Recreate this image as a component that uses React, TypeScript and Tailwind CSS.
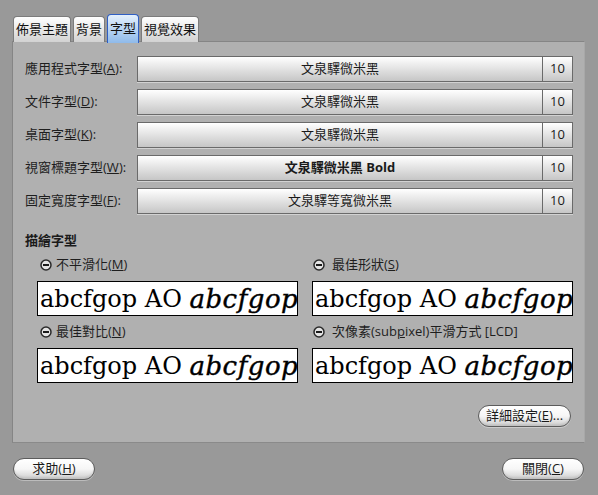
import React from "react";

const uiFont = '"Open Sans", "Noto Sans CJK TC", sans-serif';

const fontRows = [
  { label: "應用程式字型", key: "A", font: "文泉驛微米黑", bold: false },
  { label: "文件字型", key: "D", font: "文泉驛微米黑", bold: false },
  { label: "桌面字型", key: "K", font: "文泉驛微米黑", bold: false },
  { label: "視窗標題字型", key: "W", font: "文泉驛微米黑 Bold", bold: true },
  { label: "固定寬度字型", key: "F", font: "文泉驛等寬微米黑", bold: false },
];

const tabs = ["佈景主題", "背景", "字型", "視覺效果"];

function MinusIcon() {
  return (
    <svg width="12" height="12" viewBox="0 0 12 12" className="shrink-0">
      <circle cx="6" cy="6" r="5" fill="#e4e4e4" stroke="#2a2a2a" strokeWidth="1.5" />
      <rect x="3" y="5" width="6" height="2" fill="#1a1a1a" />
    </svg>
  );
}

function Preview() {
  return (
    <div
      className="h-[35px] bg-white border border-black flex items-center pl-[2px] whitespace-nowrap overflow-hidden text-black text-[24px] leading-none"
      style={{ fontFamily: '"DejaVu Serif", serif' }}
    >
      abcfgop AO&nbsp;<span className="italic text-[26px] tracking-[0.5px] [-webkit-text-stroke:0.4px_black]">abcfgop</span>
    </div>
  );
}

function PillButton({ children, className }: { children: React.ReactNode; className?: string }) {
  return (
    <div
      className={`h-[22px] rounded-full border border-[#5c5c5c] bg-gradient-to-b from-white via-[#f6f6f6] to-[#cfcfcf] shadow-[inset_0_-2px_2px_rgba(0,0,0,0.08),0_1px_0_rgba(255,255,255,0.35)] flex items-center justify-center text-[13px] text-[#1a1a1a] ${className ?? ""}`}
    >
      {children}
    </div>
  );
}

export default function App() {
  return (
    <div
      className="w-[598px] h-[495px] bg-[#999999] relative overflow-hidden"
      style={{ fontFamily: uiFont }}
    >
      {/* Tabs */}
      <div className="flex items-end gap-[2px] pl-[13px] pt-[13px] h-[42px]">
        {tabs.map((tab) =>
          tab === "字型" ? (
            <div
              key={tab}
              className="relative z-10 h-[29px] px-[2px] -mb-[1px] border border-b-0 border-[#2f5fc4] rounded-t-[4px] bg-gradient-to-b from-[#e4f0fc] to-[#8fbaea] flex items-center text-[13px] text-[#111]"
            >
              {tab}
            </div>
          ) : (
            <div
              key={tab}
              className="h-[26px] px-[2px] border border-b-0 border-[#7c7c7c] rounded-t-[4px] bg-gradient-to-b from-white to-[#d2d2d2] flex items-center text-[13px] text-[#111]"
            >
              {tab}
            </div>
          )
        )}
      </div>

      {/* Panel */}
      <div className="ml-[12px] w-[573px] h-[402px] -mt-[1px] bg-[#b0b0b0] border border-[#858585] border-r-[#a8a8a8] border-b-[#8a8a8a] pl-[12px] pr-[11px] pt-[14px] flex flex-col">
        <div className="flex flex-col gap-[7px]">
          {fontRows.map((row) => (
            <div key={row.key} className="flex items-center h-[26px]">
              <div className="w-[112px] text-[13px] text-[#1e1e1e] whitespace-nowrap">
                {row.label}(<span className="underline">{row.key}</span>):
              </div>
              <div className="flex-1 flex h-[26px] shadow-[0_1px_0_#d2d2d2]">
                <div
                  className={`flex-1 border border-[#6a6a6a] bg-gradient-to-b from-white to-[#c6c6c6] flex items-center justify-center text-[13px] text-[#1a1a1a] ${
                    row.bold ? "font-bold" : ""
                  }`}
                >
                  {row.font}
                </div>
                <div className="w-[30px] border border-l-0 border-[#6a6a6a] bg-gradient-to-b from-white to-[#c6c6c6] flex items-center justify-center text-[13px] text-[#1a1a1a]">
                  10
                </div>
              </div>
            </div>
          ))}
        </div>

        <div className="mt-[19px] h-[16px] flex items-center text-[13px] font-bold text-[#1a1a1a]">
          描繪字型
        </div>

        <div className="ml-[12px] grid grid-cols-2 gap-x-[14px]">
          <div className="flex flex-col">
            <div className="h-[32px] flex items-center gap-[4px] pl-[3px] text-[13px] text-[#1e1e1e]">
              <MinusIcon />
              <span>
                不平滑化(<span className="underline">M</span>)
              </span>
            </div>
            <Preview />
          </div>
          <div className="flex flex-col">
            <div className="h-[32px] flex items-center gap-[7px] pl-[1px] text-[13px] text-[#1e1e1e]">
              <MinusIcon />
              <span>
                最佳形狀(<span className="underline">S</span>)
              </span>
            </div>
            <Preview />
          </div>
          <div className="flex flex-col">
            <div className="h-[32px] flex items-center gap-[4px] pl-[3px] text-[13px] text-[#1e1e1e]">
              <MinusIcon />
              <span>
                最佳對比(<span className="underline">N</span>)
              </span>
            </div>
            <Preview />
          </div>
          <div className="flex flex-col">
            <div className="h-[32px] flex items-center gap-[7px] pl-[1px] text-[13px] text-[#1e1e1e]">
              <MinusIcon />
              <span>
                次像素(sub<span className="underline">p</span>ixel)平滑方式 [LCD]
              </span>
            </div>
            <Preview />
          </div>
        </div>

        <div className="mt-[22px] flex justify-end pr-[2px]">
          <PillButton className="w-[93px]">
            詳細設定(<span className="underline">E</span>)...
          </PillButton>
        </div>
      </div>

      {/* Bottom buttons */}
      <div className="flex justify-between px-[13px] pr-[14px] mt-[15px]">
        <PillButton className="w-[82px]">
          求助(<span className="underline">H</span>)
        </PillButton>
        <PillButton className="w-[82px]">
          關閉(<span className="underline">C</span>)
        </PillButton>
      </div>
    </div>
  );
}
